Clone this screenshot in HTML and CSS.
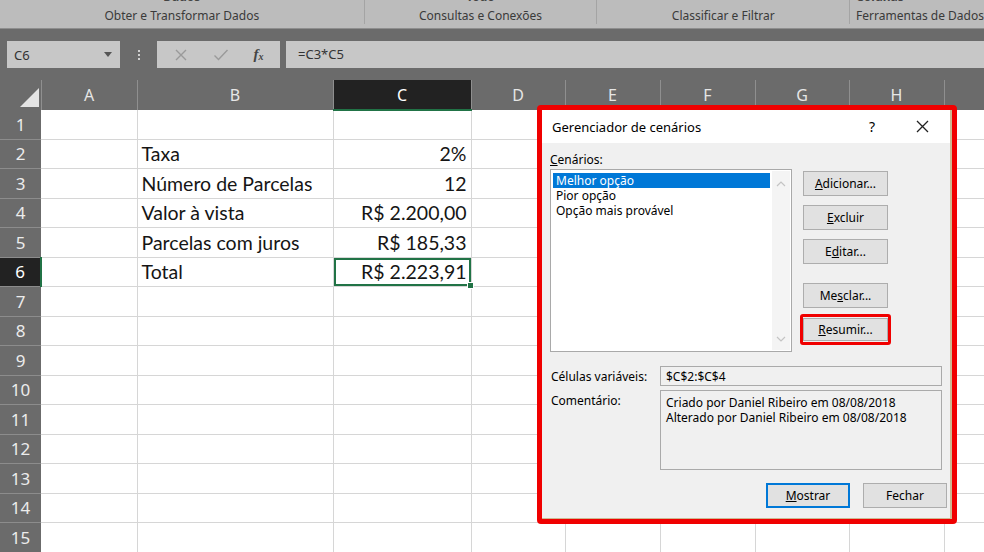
FILE: index.html
```html
<!DOCTYPE html>
<html lang="pt-br">
<head>
    <meta charset="UTF-8">
    <title>Gerenciador de cenários</title>
    <link rel="stylesheet" href="styles.css">
</head>
<body>
    <!-- Faixa de opções (cortada no topo) -->
    <div class="ribbon">
        <div class="grupo g1"><span class="cortado">Dados</span><span class="rotulo">Obter e Transformar Dados</span></div>
        <div class="grupo g2"><span class="cortado">Todo</span><span class="rotulo">Consultas e Conexões</span></div>
        <div class="grupo g3"><span class="cortado"></span><span class="rotulo">Classificar e Filtrar</span></div>
        <div class="grupo g4"><span class="cortado">Colunas</span><span class="rotulo">Ferramentas de Dados</span></div>
    </div>

    <!-- Barra de fórmulas -->
    <div class="barra-formula">
        <div class="caixa-nome">
            <span>C6</span>
            <svg width="8" height="5" viewBox="0 0 8 5"><path d="M0 0h8L4 5z" fill="#555"/></svg>
        </div>
        <div class="pontos"><i></i><i></i><i></i></div>
        <div class="botoes-formula">
            <svg width="14" height="14" viewBox="0 0 14 14"><path d="M2 2l10 10M12 2L2 12" stroke="#9a9a9a" stroke-width="1.4"/></svg>
            <svg width="16" height="14" viewBox="0 0 16 14"><path d="M1.5 7.5l4 4L14.5 2" stroke="#9a9a9a" stroke-width="1.4" fill="none"/></svg>
            <span class="fx"><i>f</i><sub>x</sub></span>
        </div>
        <div class="formula">=C3*C5</div>
    </div>

    <!-- Planilha -->
    <table class="planilha">
        <colgroup>
            <col style="width:41px"><col style="width:96px"><col style="width:196px"><col style="width:138px"><col style="width:94px">
            <col style="width:95px"><col style="width:95px"><col style="width:94px"><col style="width:95px"><col style="width:40px">
        </colgroup>
        <thead>
            <tr>
                <th class="canto"><span class="triangulo"></span></th>
                <th>A</th><th>B</th><th class="sel">C</th><th>D</th><th>E</th><th>F</th><th>G</th><th>H</th><th></th>
            </tr>
        </thead>
        <tbody>
            <tr><th>1</th><td></td><td></td><td></td><td></td><td></td><td></td><td></td><td></td><td></td></tr>
            <tr><th>2</th><td></td><td>Taxa</td><td class="num">2%</td><td></td><td></td><td></td><td></td><td></td><td></td></tr>
            <tr><th>3</th><td></td><td>Número de Parcelas</td><td class="num">12</td><td></td><td></td><td></td><td></td><td></td><td></td></tr>
            <tr><th>4</th><td></td><td>Valor à vista</td><td class="num">R$ 2.200,00</td><td></td><td></td><td></td><td></td><td></td><td></td></tr>
            <tr><th>5</th><td></td><td>Parcelas com juros</td><td class="num">R$ 185,33</td><td></td><td></td><td></td><td></td><td></td><td></td></tr>
            <tr><th class="sel">6</th><td></td><td>Total</td><td class="num ativa">R$ 2.223,91</td><td></td><td></td><td></td><td></td><td></td><td></td></tr>
            <tr><th>7</th><td></td><td></td><td></td><td></td><td></td><td></td><td></td><td></td><td></td></tr>
            <tr><th>8</th><td></td><td></td><td></td><td></td><td></td><td></td><td></td><td></td><td></td></tr>
            <tr><th>9</th><td></td><td></td><td></td><td></td><td></td><td></td><td></td><td></td><td></td></tr>
            <tr><th>10</th><td></td><td></td><td></td><td></td><td></td><td></td><td></td><td></td><td></td></tr>
            <tr><th>11</th><td></td><td></td><td></td><td></td><td></td><td></td><td></td><td></td><td></td></tr>
            <tr><th>12</th><td></td><td></td><td></td><td></td><td></td><td></td><td></td><td></td><td></td></tr>
            <tr><th>13</th><td></td><td></td><td></td><td></td><td></td><td></td><td></td><td></td><td></td></tr>
            <tr><th>14</th><td></td><td></td><td></td><td></td><td></td><td></td><td></td><td></td><td></td></tr>
            <tr><th>15</th><td></td><td></td><td></td><td></td><td></td><td></td><td></td><td></td><td></td></tr>
        </tbody>
    </table>

    <!-- Janela do gerenciador de cenários, destacada em vermelho -->
    <div class="destaque">
        <div class="janela">
            <div class="titulo">
                <span class="titulo-texto">Gerenciador de cenários</span>
                <span class="ajuda">?</span>
                <svg class="fechar-x" width="13" height="13" viewBox="0 0 13 13"><path d="M1 1l11 11M12 1L1 12" stroke="#222" stroke-width="1.3"/></svg>
            </div>
            <div class="corpo">
                <div class="rotulo-lista"><u>C</u>enários:</div>
                <div class="linha-lista">
                    <div class="lista">
                        <div class="itens">
                            <div class="item marcado">Melhor opção</div>
                            <div class="item">Pior opção</div>
                            <div class="item">Opção mais provável</div>
                        </div>
                        <div class="rolagem">
                            <svg width="10" height="6" viewBox="0 0 10 6"><path d="M1 5l4-4 4 4" stroke="#c4c4c4" stroke-width="1.2" fill="none"/></svg>
                            <svg width="10" height="6" viewBox="0 0 10 6"><path d="M1 1l4 4 4-4" stroke="#c4c4c4" stroke-width="1.2" fill="none"/></svg>
                        </div>
                    </div>
                    <div class="acoes">
                        <button class="botao"><u>A</u>dicionar...</button>
                        <button class="botao"><u>E</u>xcluir</button>
                        <button class="botao">E<u>d</u>itar...</button>
                        <button class="botao mesclar">Me<u>s</u>clar...</button>
                        <div class="marca-resumir"><button class="botao"><u>R</u>esumir...</button></div>
                    </div>
                </div>
                <div class="campo primeiro">
                    <span class="campo-rotulo">Células variáveis:</span>
                    <div class="caixa">$C$2:$C$4</div>
                </div>
                <div class="campo">
                    <span class="campo-rotulo">Comentário:</span>
                    <div class="caixa comentario">Criado por Daniel Ribeiro em 08/08/2018<br>Alterado por Daniel Ribeiro em 08/08/2018</div>
                </div>
                <div class="rodape">
                    <button class="botao padrao"><u>M</u>ostrar</button>
                    <button class="botao">Fechar</button>
                </div>
            </div>
        </div>
    </div>
</body>
</html>
```

FILE: styles.css
```css
/* Base */
body {
    margin: 0;
    width: 984px;
    height: 552px;
    overflow: hidden;
    background-color: #6b6b6b;
    font-family: 'Noto Sans', sans-serif;
    position: relative;
}

/* Faixa de opções */
.ribbon {
    display: flex;
    height: 28px;
    background-color: #bcbcbc;
    border-bottom: 1px solid #8e8e8e;
    overflow: hidden;
}

.grupo {
    display: flex;
    flex-direction: column;
    align-items: center;
    border-right: 1px solid #a4a4a4;
    height: 24px;
    font-size: 12px;
    color: #3a3a3a;
}

.g1 { width: 364px; }
.g2 { width: 232px; }
.g3 { width: 252px; }
.g4 { flex: 1; border-right: none; align-items: flex-start; padding-left: 6px; }

.cortado {
    height: 3px;
    margin-top: -3px;
    line-height: 0;
    font-weight: bold;
    color: #444;
}

.rotulo {
    margin-top: 10px;
    white-space: nowrap;
}

/* Barra de fórmulas */
.barra-formula {
    display: flex;
    align-items: center;
    height: 51px;
    padding-left: 7px;
}

.caixa-nome {
    display: flex;
    align-items: center;
    justify-content: space-between;
    width: 113px;
    height: 27px;
    padding: 0 8px 0 7px;
    box-sizing: border-box;
    background-color: #c7c7c7;
    font-size: 13px;
    color: #333;
}

.pontos {
    display: flex;
    flex-direction: column;
    gap: 2px;
    width: 37px;
    align-items: center;
}

.pontos i {
    width: 2px;
    height: 2px;
    background-color: #d0d0d0;
}

.botoes-formula {
    display: flex;
    align-items: center;
    justify-content: space-around;
    width: 123px;
    height: 27px;
    padding: 0 4px;
    box-sizing: border-box;
    background-color: #c7c7c7;
}

.fx {
    font-family: 'Liberation Serif', serif;
    font-weight: bold;
    font-size: 15px;
    color: #444;
}

.fx sub {
    font-size: 10px;
    font-style: italic;
    vertical-align: -1px;
}

.formula {
    flex: 1;
    height: 27px;
    margin-left: 6px;
    padding-left: 12px;
    background-color: #c7c7c7;
    font-size: 13px;
    line-height: 27px;
    color: #333;
}

/* Planilha */
.planilha {
    border-collapse: collapse;
    table-layout: fixed;
    width: 984px;
    font-family: 'Lato', sans-serif;
}

.planilha thead th {
    height: 29px;
    padding: 0;
    background-color: #6b6b6b;
    color: #e6e6e6;
    font-family: 'Noto Sans', sans-serif;
    font-weight: normal;
    font-size: 16px;
    border-right: 1px solid #8f8f8f;
}

.planilha thead th.sel {
    background-color: #222;
    color: #fff;
    border-bottom: 2px solid #217346;
}

.canto {
    position: relative;
}

.triangulo {
    position: absolute;
    right: 2px;
    bottom: 3px;
    width: 0;
    height: 0;
    border-left: 19px solid transparent;
    border-bottom: 19px solid #e4e4e4;
}

.planilha tbody th {
    height: 28.5px;
    padding: 0;
    background-color: #6b6b6b;
    color: #ececec;
    font-family: 'Noto Sans', sans-serif;
    font-weight: normal;
    font-size: 17px;
    border-bottom: 1px solid #8c8c8c;
}

.planilha tbody th.sel {
    background-color: #222;
    color: #fff;
    border-right: 2px solid #217346;
}

.planilha td {
    padding: 0 4px;
    background-color: #fff;
    border-right: 1px solid #d6d6d6;
    border-bottom: 1px solid #d6d6d6;
    font-size: 19.5px;
    color: #151515;
    white-space: nowrap;
}

.planilha td.num {
    text-align: right;
}

.planilha td.ativa {
    position: relative;
    box-shadow: inset 0 0 0 2px #217346;
}

.planilha td.ativa::after {
    content: '';
    position: absolute;
    right: -3px;
    bottom: -3px;
    width: 5px;
    height: 5px;
    background-color: #217346;
    border: 1px solid #fff;
}

/* Destaque vermelho e janela */
.destaque {
    position: absolute;
    left: 537px;
    top: 105px;
    width: 420px;
    height: 419px;
    box-sizing: border-box;
    border: 5px solid #f00000;
    border-radius: 4px;
}

.janela {
    height: 100%;
    box-sizing: border-box;
    background-color: #f0f0f0;
    border-right: 2px solid #cdb892;
    border-bottom: 1px solid #cdb892;
    font-size: 12px;
    color: #000;
}

.titulo {
    display: flex;
    align-items: center;
    height: 33px;
    padding-left: 10px;
    background-color: #fff;
    font-size: 13px;
}

.titulo-texto {
    flex: 1;
}

.ajuda {
    margin-right: 41px;
    font-size: 14px;
}

.fechar-x {
    margin-right: 21px;
}

.corpo {
    padding: 8px 0 0 8px;
}

.rotulo-lista {
    height: 18px;
}

.linha-lista {
    display: flex;
    gap: 11px;
}

.lista {
    display: flex;
    width: 242px;
    height: 183px;
    box-sizing: border-box;
    background-color: #fff;
    border: 1px solid #a9a9a9;
    padding: 3px 1px 1px 2px;
}

.itens {
    flex: 1;
}

.item {
    height: 15px;
    line-height: 15px;
    padding-left: 3px;
}

.item.marcado {
    background-color: #0078d7;
    color: #fff;
}

.rolagem {
    display: flex;
    flex-direction: column;
    justify-content: space-between;
    align-items: center;
    width: 18px;
    margin: -2px 0 0 2px;
    padding: 10px 0 8px;
    background-color: #f4f4f4;
}

.acoes {
    display: flex;
    flex-direction: column;
    padding-top: 2px;
}

.botao {
    width: 85px;
    height: 25px;
    margin-bottom: 8px;
    padding: 0;
    background-color: #e1e1e1;
    border: 1px solid #adadad;
    font-family: 'Noto Sans', sans-serif;
    font-size: 12px;
    color: #000;
}

.botao + .botao {
    margin-top: 1px;
}

.botao.mesclar {
    margin-top: 11px;
    margin-bottom: 6px;
}

.marca-resumir {
    width: 91px;
    margin-left: -3px;
    box-sizing: border-box;
    border: 3px solid #f00000;
    border-radius: 3px;
}

.marca-resumir .botao {
    margin: 1px 0 1px 0;
    height: 23px;
}

.campo {
    display: flex;
    align-items: flex-start;
    margin-top: 4px;
}

.campo.primeiro {
    margin-top: 14px;
}

.campo-rotulo {
    width: 109px;
    padding-top: 2px;
    padding-left: 1px;
}

.caixa {
    width: 282px;
    height: 20px;
    box-sizing: border-box;
    padding: 1px 5px;
    background-color: #f0f0f0;
    border: 1px solid #aaa;
    line-height: 17px;
}

.comentario {
    height: 80px;
    padding-top: 4px;
    line-height: 15px;
}

.rodape {
    display: flex;
    justify-content: flex-end;
    gap: 13px;
    margin-top: 13px;
    padding-right: 3px;
}

.rodape .botao {
    width: 84px;
    margin: 0;
}

.botao.padrao {
    border: 2px solid #0078d7;
}
```
